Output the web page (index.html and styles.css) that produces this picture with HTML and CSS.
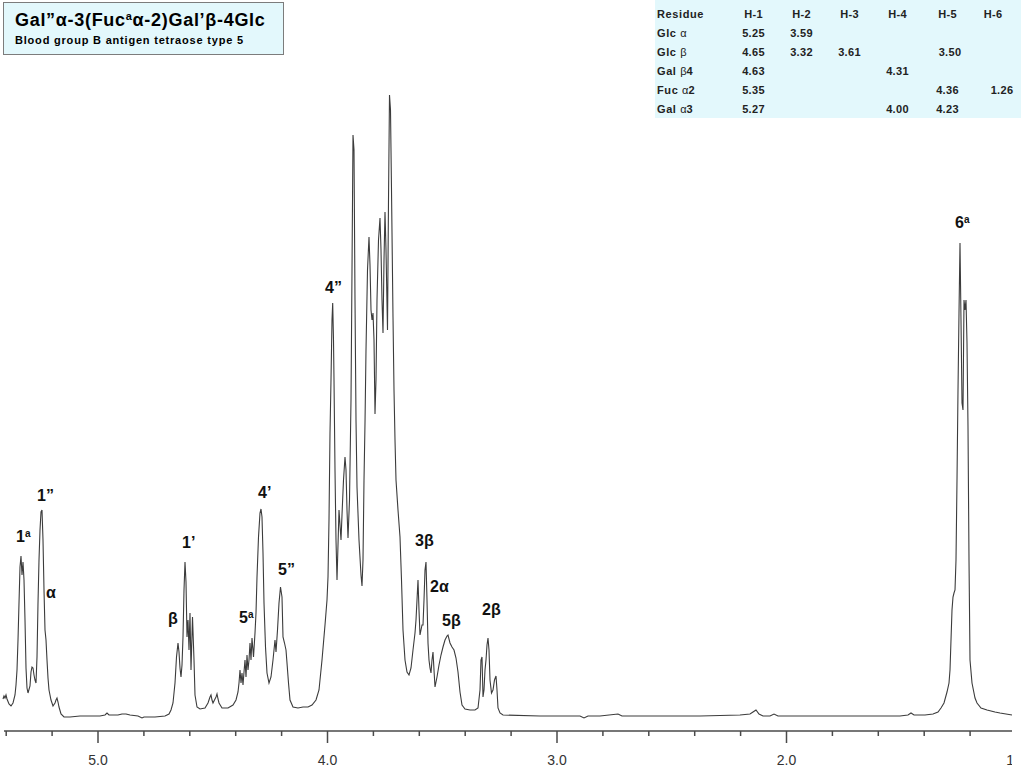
FILE: index.html
```html
<!DOCTYPE html>
<html lang="en">
<head>
<meta charset="utf-8">
<title>Blood group B antigen tetraose type 5 – 1H NMR</title>
<link rel="stylesheet" href="styles.css">
</head>
<body>
<div class="figure">
  <svg class="chart" viewBox="0 0 1024 768" width="1024" height="768" aria-label="1H NMR spectrum">
    <defs>
      <clipPath id="plotclip"><rect x="0" y="0" width="1012" height="768"/></clipPath>
    </defs>
    <polyline class="trace" points="3,699 4,696 5,698 6,695 7,699 9,704 11,706 13,703 15,695 16,685 17,670 18,640 19,603 20,567 21,556 22,575 23,562 24,580 25,620 26,668 27,688 28,693 30,686 31,672 32,667 33,668 34,675 35,680 36,683 37,657 38,603 39,560 40,530 41,512 42,510 43,540 44,590 45,630 46,640 47,660 48,678 49,690 51,700 53,706 55,703 56,700 57,698 58,702 59,707 61,714 64,717 70,717 80,716 90,716 100,716 105,715 107,713 109,715 118,715 122,714 126,714 130,715 138,716 142,718 144,717 155,717 165,716 169,714 171,710 173,703 175,683 176.5,657 178,643 179,652 180,668 181,677 182,665 183,637 184,590 185,562 186,582 187,637 188,620 189,650 190,613 191,670 192.5,617 194,660 195,695 197,707 200,709 205,708 208,703 210,697 211,695 212,700 213,703 215,699 216,697 217,694 218,699 219,703 222,708 228,708 233,705 236,700 238,692 239,683 240,670 241,683 242,673 243,685 244,672 245,660 246,677 247,655 248,670 249,660 250,643 251,660 252,638 253.5,657 255,633 256,613 257,577 258.5,537 260,513 261,509 262,517 263,553 264,603 265.5,647 267,673 269,683 271,677 273,660 275,640 276,652 277.5,630 279,603 280.5,587 282,597 283,637 284.5,643 286,650 287,663 288.5,683 290,700 293,707 298,708 303,707 308,707 312,705 316,700 319,690 322,660 325,625 327,600 328,577 329,520 330,433 331,380 332,320 332.7,303 333.5,340 334,380 335,470 336,540 337,580 338,545 339,510 340,525 341,540 342,515 343.5,480 345,457 346,470 347,510 348,538 349.5,500 351,400 352,270 353,135 354,150 355,300 356,420 357,487 359,540 361,575 362,586 363,560 364,480 365,423 366,350 367.5,270 369,237 370,265 371,310 372,320 373,313 374,340 375,414 376,380 377,300 378.5,240 380,218 381,250 382,300 383,333 384,260 385,212 386,250 387.5,330 388.5,200 389.5,95 390.5,110 391.5,190 393,317 394,390 395,440 396,480 398,510 400,537 401.5,580 403,630 405,660 407,672 409,675 411,668 413,650 415,633 416,620 417,600 418,580 419,610 420,635 421,630 422,625 423,625 424,600 425,570 426,562 427,600 428,643 429,660 430,668 431,673 432,660 433,652 434,670 435,687 436,682 437,677 439,665 441,655 443,647 445,640 447,636 448,635 450,643 452,647 454,650 456,658 458,672 460,692 462,705 465,709 470,710 475,710 478,708 480,690 481,660 482,657 483,697 484,690 485,670 486,660 487,645 488,638 489,650 490,680 491.5,693 493,690 494.5,680 496,676 497,690 498,708 500,713 503,715 540,716 580,716 584,718 588,716 600,716 618,714 622,716 660,716 700,716 740,715 750,714 753,712 756,710 759,714 763,716 770,716 774,714 778,716 820,716 860,716 900,716 908,715 911,713 914,715 925,715 933,714 938,712 941,708 944,703 947,692 949,683 950,670 951,640 952,610 953,597 954,593 955,590 956,560 957,480 958,390 959,313 960,243 961,320 962,403 963,410 964,300 965,310 966,300 967,343 968,427 969,560 970,660 972,683 975,698 977,703 981,708 987,710 995,712 1000,713 1006,714 1012,715"/>

    <g class="axis">
      <line x1="4" y1="731" x2="1012" y2="731"/>
      <line x1="6.2" y1="731" x2="6.2" y2="736"/>
      <line x1="52.1" y1="731" x2="52.1" y2="736"/>
      <line x1="98" y1="731" x2="98" y2="743"/>
      <line x1="143.9" y1="731" x2="143.9" y2="736"/>
      <line x1="189.8" y1="731" x2="189.8" y2="736"/>
      <line x1="235.7" y1="731" x2="235.7" y2="736"/>
      <line x1="281.6" y1="731" x2="281.6" y2="736"/>
      <line x1="327.5" y1="731" x2="327.5" y2="743"/>
      <line x1="373.4" y1="731" x2="373.4" y2="736"/>
      <line x1="419.3" y1="731" x2="419.3" y2="736"/>
      <line x1="465.2" y1="731" x2="465.2" y2="736"/>
      <line x1="511.1" y1="731" x2="511.1" y2="736"/>
      <line x1="557" y1="731" x2="557" y2="743"/>
      <line x1="602.9" y1="731" x2="602.9" y2="736"/>
      <line x1="648.8" y1="731" x2="648.8" y2="736"/>
      <line x1="694.7" y1="731" x2="694.7" y2="736"/>
      <line x1="740.6" y1="731" x2="740.6" y2="736"/>
      <line x1="786.5" y1="731" x2="786.5" y2="743"/>
      <line x1="832.4" y1="731" x2="832.4" y2="736"/>
      <line x1="878.3" y1="731" x2="878.3" y2="736"/>
      <line x1="924.2" y1="731" x2="924.2" y2="736"/>
      <line x1="970.1" y1="731" x2="970.1" y2="736"/>
    </g>
    <g class="ticklabel" clip-path="url(#plotclip)">
      <text x="98" y="765">5.0</text>
      <text x="327.5" y="765">4.0</text>
      <text x="557" y="765">3.0</text>
      <text x="786.5" y="765">2.0</text>
      <text x="1016" y="765">1.0</text>
    </g>

    <g class="peaklabel">
      <text x="16" y="542">1<tspan class="sup" dy="-5">a</tspan></text>
      <text x="37" y="501">1”</text>
      <text x="46" y="598">α</text>
      <text x="168" y="624">β</text>
      <text x="182" y="548">1’</text>
      <text x="239" y="623">5<tspan class="sup" dy="-5">a</tspan></text>
      <text x="258" y="498">4’</text>
      <text x="278" y="575">5”</text>
      <text x="325" y="293">4”</text>
      <text x="415" y="546">3β</text>
      <text x="430" y="592">2α</text>
      <text x="442" y="626">5β</text>
      <text x="482" y="615">2β</text>
      <text x="955" y="228">6<tspan class="sup" dy="-5">a</tspan></text>
    </g>
  </svg>

  <header class="header">
    <div class="titlebox">
      <div class="title">Gal”α-3(Fuc<sup class="tsup">a</sup>α-2)Gal’β-4Glc</div>
      <div class="subtitle">Blood group B antigen tetraose type 5</div>
    </div>
    <div class="tablebox">
      <table class="shifts">
        <colgroup>
          <col class="c-res"><col class="c-h1"><col class="c-h2"><col class="c-h3"><col class="c-h4"><col class="c-h5"><col class="c-h6">
        </colgroup>
        <thead>
          <tr><th class="res">Residue</th><th>H-1</th><th>H-2</th><th>H-3</th><th>H-4</th><th>H-5</th><th class="h6">H-6</th></tr>
        </thead>
        <tbody>
          <tr><td class="res">Glc <span class="gr">α</span></td><td>5.25</td><td>3.59</td><td></td><td></td><td></td><td></td></tr>
          <tr><td class="res">Glc <span class="gr">β</span></td><td>4.65</td><td>3.32</td><td>3.61</td><td></td><td class="h5v">3.50</td><td></td></tr>
          <tr><td class="res">Gal <span class="gr">β</span>4</td><td>4.63</td><td></td><td></td><td>4.31</td><td></td><td></td></tr>
          <tr><td class="res">Fuc <span class="gr">α</span>2</td><td>5.35</td><td></td><td></td><td></td><td>4.36</td><td class="h6v">1.26</td></tr>
          <tr><td class="res">Gal <span class="gr">α</span>3</td><td>5.27</td><td></td><td></td><td>4.00</td><td>4.23</td><td></td></tr>
        </tbody>
      </table>
    </div>
  </header>
</div>
</body>
</html>
```

FILE: styles.css
```css
html, body {
  margin: 0;
  padding: 0;
  background: #ffffff;
}

body {
  width: 1024px;
  height: 768px;
  overflow: hidden;
  font-family: "Liberation Sans", Arial, sans-serif;
  color: #000;
}

.figure {
  display: grid;
  width: 1024px;
  height: 768px;
}

.figure > * {
  grid-area: 1 / 1;
}

/* ---------- spectrum canvas ---------- */
.chart {
  display: block;
  width: 1024px;
  height: 768px;
}

.trace {
  fill: none;
  stroke: #3c3c3c;
  stroke-width: 1.1;
  stroke-linejoin: miter;
}

.axis line {
  stroke: #4a4a4a;
  stroke-width: 1.5;
}

.ticklabel text {
  font-family: "Liberation Sans", Arial, sans-serif;
  font-size: 14px;
  fill: #333;
  text-anchor: middle;
}

.peaklabel text {
  font-family: "Liberation Sans", Arial, sans-serif;
  font-size: 16px;
  font-weight: bold;
  fill: #111;
}

.peaklabel .sup {
  font-size: 10px;
}

/* ---------- header: title box + shift table ---------- */
.header {
  display: flex;
  justify-content: space-between;
  align-items: flex-start;
  align-self: start;
  height: 0;
}

.titlebox {
  box-sizing: border-box;
  width: 281px;
  height: 53px;
  margin: 2px 0 0 3px;
  padding: 7px 0 0 11px;
  background: #e3f8fc;
  border: 1px solid #7c7c7c;
}

.title {
  font-size: 18px;
  font-weight: bold;
  line-height: 20px;
  letter-spacing: 0.7px;
  white-space: nowrap;
}

.tsup {
  font-size: 11px;
  line-height: 0;
  vertical-align: 6px;
}

.subtitle {
  margin-top: 4px;
  font-size: 11px;
  line-height: 13px;
  font-weight: bold;
  letter-spacing: 0.8px;
  white-space: nowrap;
}

.tablebox {
  box-sizing: border-box;
  width: 366px;
  height: 118px;
  margin-right: 3px;
  padding-top: 5px;
  background: #e3f8fc;
}

.shifts {
  border-collapse: collapse;
  table-layout: fixed;
  width: 366px;
  font-size: 11px;
  font-weight: bold;
  color: #222;
  letter-spacing: 0.3px;
}

.c-res { width: 75px; }
.c-h1 { width: 47px; }
.c-h2 { width: 49px; }
.c-h3 { width: 47px; }
.c-h4 { width: 49px; }
.c-h5 { width: 51px; }
.c-h6 { width: 48px; }

.shifts th,
.shifts td {
  height: 19px;
  padding: 0;
  line-height: 19px;
  text-align: center;
  white-space: nowrap;
}

.shifts .res {
  text-align: left;
  padding-left: 2px;
  letter-spacing: 0.6px;
}

.shifts .gr {
  font-weight: normal;
  letter-spacing: 0;
}

.shifts .h6 { padding-right: 8px; }
.shifts .h6v { padding-left: 10px; }
.shifts .h5v { padding-left: 5px; }
```
